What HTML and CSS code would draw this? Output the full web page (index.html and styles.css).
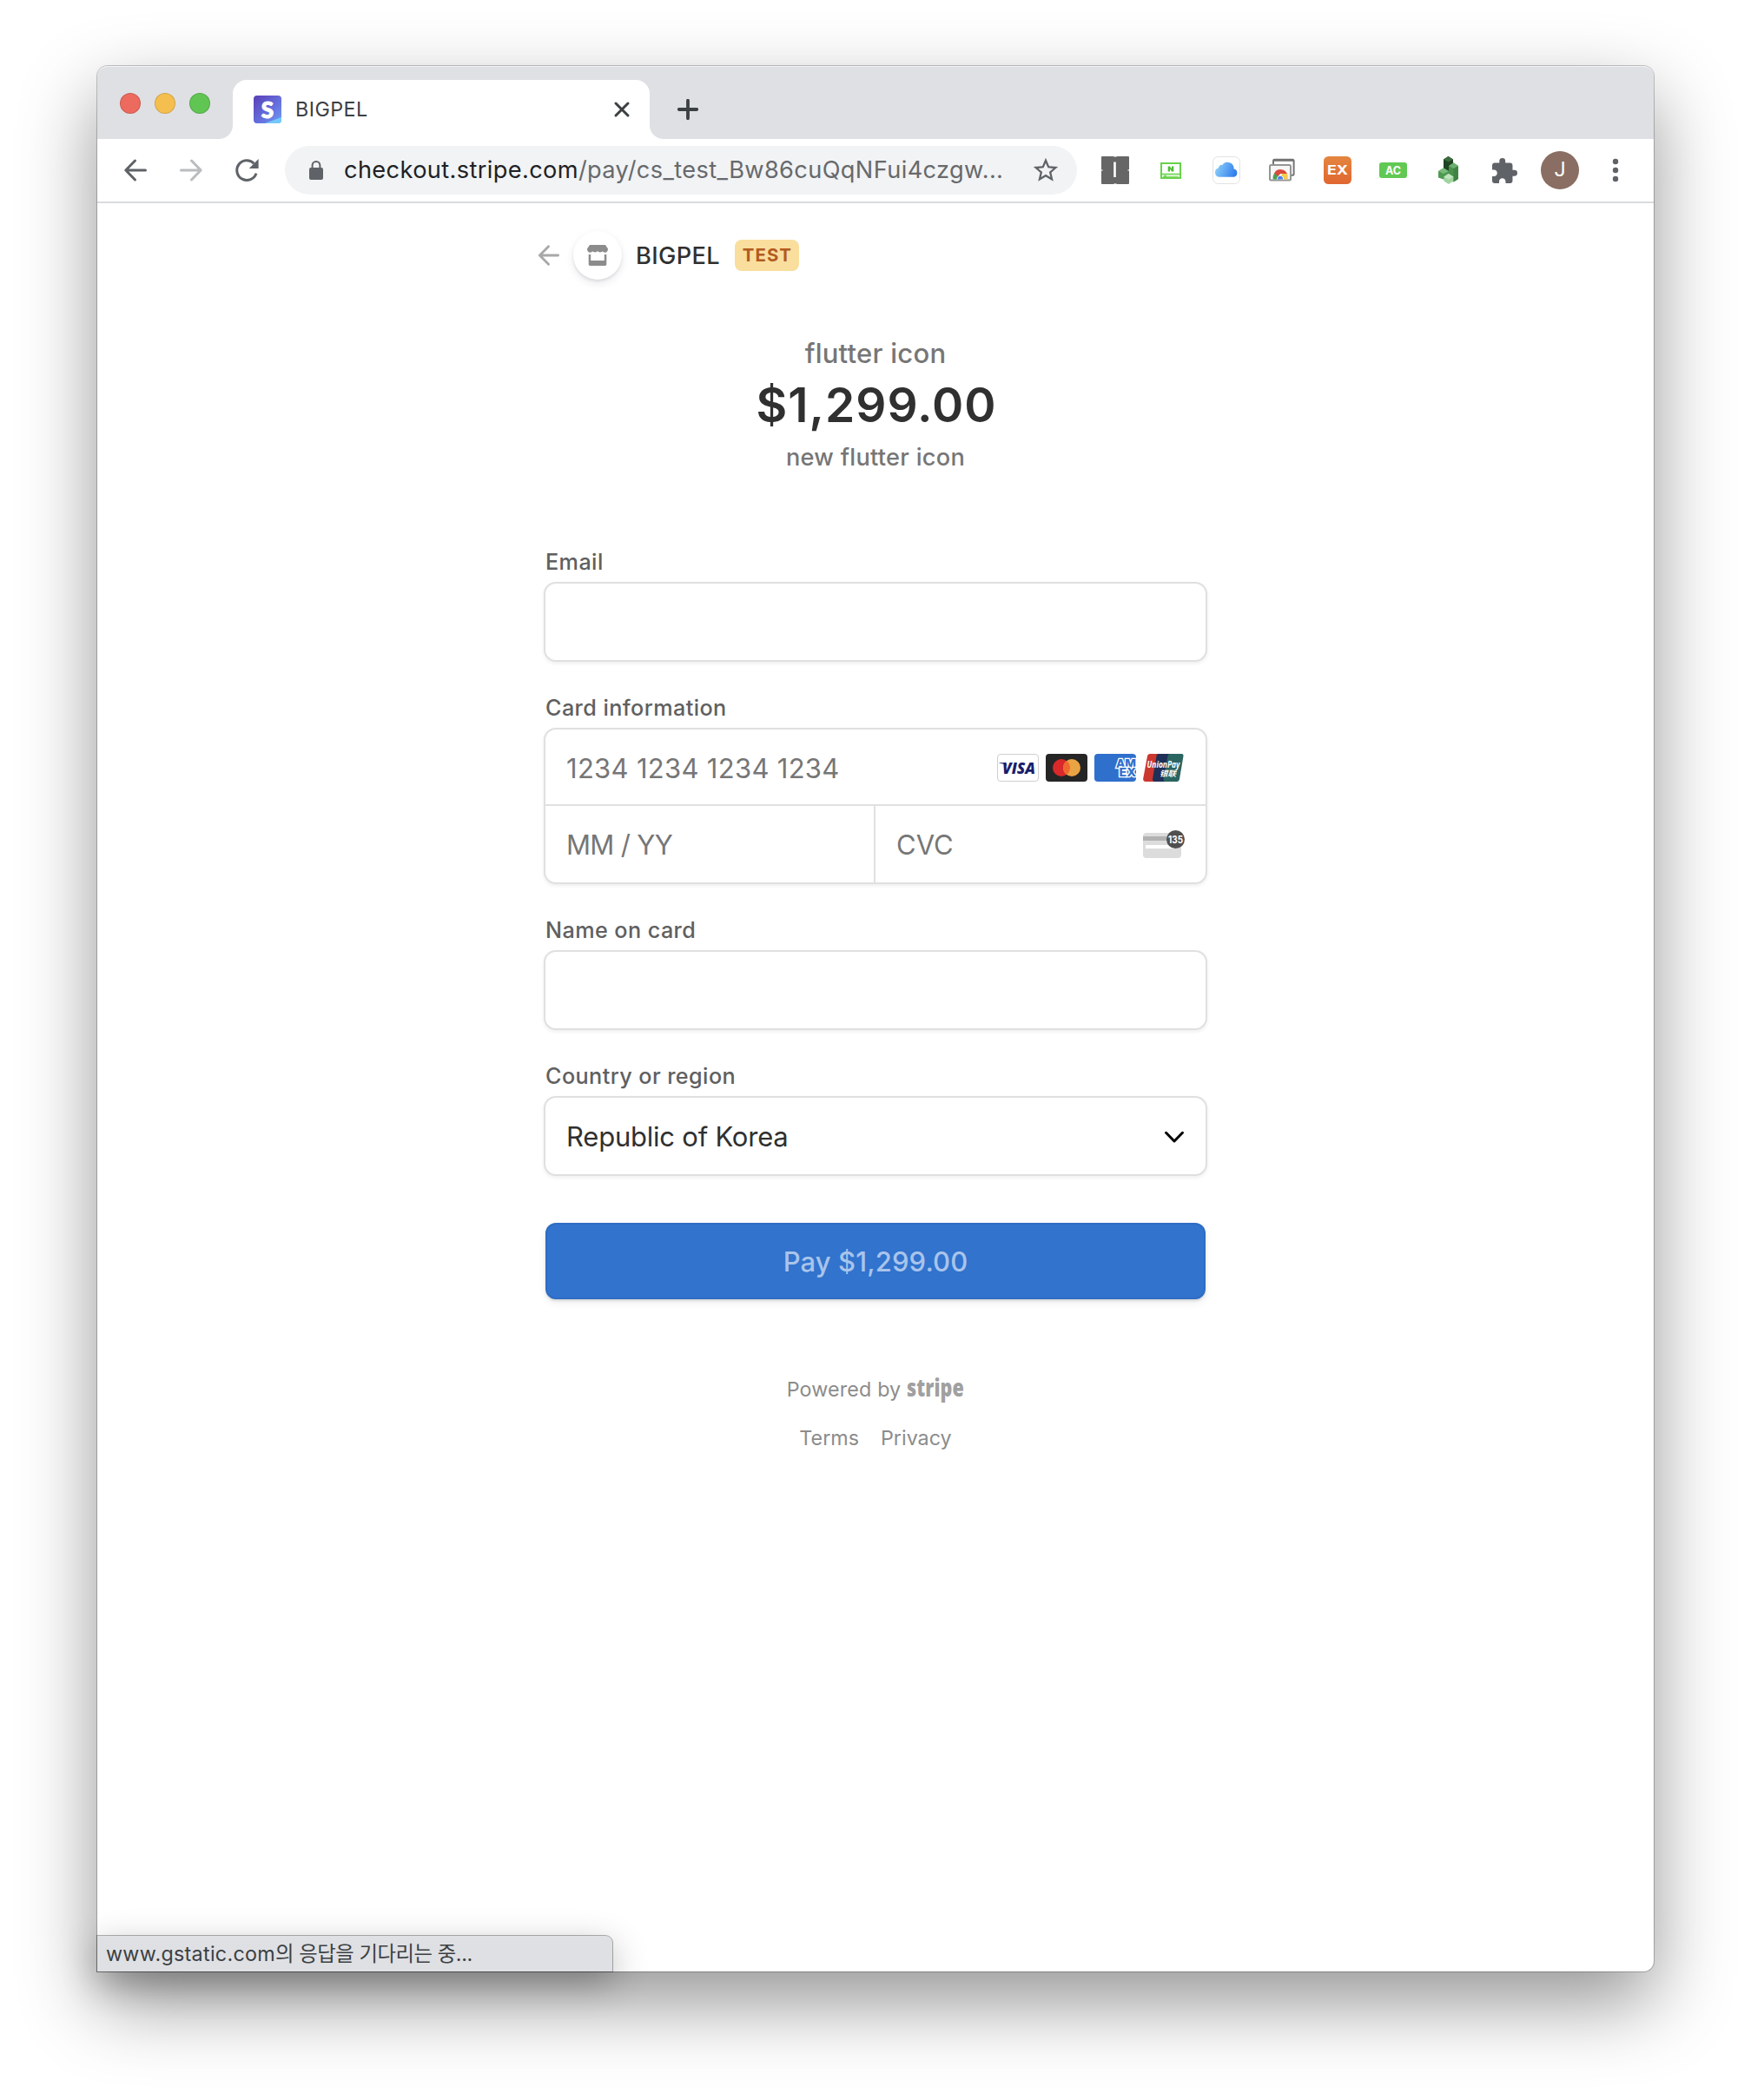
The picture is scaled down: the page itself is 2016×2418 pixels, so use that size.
FILE: index.html
```html
<!DOCTYPE html>
<html lang="en">
<head>
<meta charset="utf-8">
<title>BIGPEL</title>
<link rel="stylesheet" href="styles.css">
</head>
<body>
<div class="window">
  <div class="tabstrip">
    <div class="lights"><span class="light red"></span><span class="light yellow"></span><span class="light green"></span></div>
    <div class="tab">
      <svg class="favicon" width="32" height="32" viewBox="0 0 32 32">
        <defs><linearGradient id="fav" x1="0" y1="0" x2="1" y2="1"><stop offset="0" stop-color="#5a3fb6"/><stop offset=".6" stop-color="#6672e0"/><stop offset="1" stop-color="#6f9df0"/></linearGradient></defs>
        <rect width="32" height="32" rx="4" fill="url(#fav)"/>
        <path d="M13 32L32 25v3a4 4 0 0 1-4 4z" fill="#74c8fb"/>
        <text x="16" y="25.5" text-anchor="middle" class="fav-letter">S</text>
      </svg>
      <span class="tab-title">BIGPEL</span>
      <svg class="tab-close" width="20" height="20" viewBox="0 0 20 20"><path d="M3 3l14 14M17 3L3 17" stroke="#3c4043" stroke-width="3" stroke-linecap="round"/></svg>
    </div>
    <svg class="new-tab" width="24" height="24" viewBox="0 0 24 24"><path d="M12 1.8v20.4M1.8 12h20.4" stroke="#3c4043" stroke-width="3.8" stroke-linecap="round"/></svg>
  </div>
  <div class="toolbar">
    <div class="slot"><svg width="32" height="32" viewBox="0 0 32 32" fill="none" stroke="#5f6368" stroke-width="3" stroke-linecap="round" stroke-linejoin="round"><path d="M27.5 16H5M15.5 5L4.8 16l10.7 11"/></svg></div>
    <div class="slot"><svg width="32" height="32" viewBox="0 0 32 32" fill="none" stroke="#babcbe" stroke-width="3" stroke-linecap="round" stroke-linejoin="round"><path d="M4.5 16H27M16.5 5l10.7 11-10.7 11"/></svg></div>
    <div class="slot"><svg width="32" height="32" viewBox="0 0 32 32" fill="none"><path d="M27 19.6A11.4 11.4 0 1 1 24.4 8.2" stroke="#5f6368" stroke-width="3"/><path d="M29.6 3v11H18.8z" fill="#5f6368"/></svg></div>
    <div class="omnibox">
      <svg class="lock" width="16" height="22" viewBox="0 0 16 22"><rect y="8" width="16" height="14" rx="2" fill="#5f6368"/><path d="M3.6 9V5.4a4.4 4.4 0 0 1 8.8 0V9" fill="none" stroke="#5f6368" stroke-width="2"/></svg>
      <span class="url"><span class="host">checkout.stripe.com</span>/pay/cs_test_Bw86cuQqNFui4czgw...</span>
      <svg class="star" width="34" height="34" viewBox="0 0 24 24"><path fill="#5f6368" d="M22 9.24l-7.19-.62L12 2 9.19 8.63 2 9.24l5.46 4.73L5.82 21 12 17.27 18.18 21l-1.63-7.03L22 9.24zM12 15.4l-3.76 2.27 1-4.28-3.32-2.88 4.38-.38L12 6.1l1.71 4.04 4.38.38-3.32 2.88 1 4.28L12 15.4z"/></svg>
    </div>
    <div class="extensions">
      <div class="slot"><svg width="32" height="32" viewBox="0 0 32 32"><rect width="32" height="32" rx="1" fill="#666"/><path d="M15.5 6.5v17.5" stroke="#fff" stroke-width="2.6"/><path d="M14.5 0h3M14.5 32h3M0 16h1.5M30.5 16h1.5" stroke="#ddd" stroke-width="1.4"/></svg></div>
      <div class="slot"><svg width="24" height="19" viewBox="0 0 24 19"><rect x="1" y="1" width="22" height="17" fill="#fff" stroke="#67d24a" stroke-width="2"/><path d="M1 13.5h22" stroke="#67d24a" stroke-width="1.6"/><path d="M3 16.2h18" stroke="#67d24a" stroke-width="1"/><circle cx="5.5" cy="16" r="1.4" fill="#67d24a"/><path d="M8.7 10.5v-6h2.3l2 3v-3h2.3v6H13l-2-3v3z" fill="#4fbd35"/></svg></div>
      <div class="slot"><svg width="32" height="32" viewBox="0 0 32 32"><defs><linearGradient id="cl" x1="0" y1=".3" x2="1" y2=".6"><stop offset="0" stop-color="#8dd0fb"/><stop offset="1" stop-color="#2f7ceb"/></linearGradient></defs><rect x=".5" y=".5" width="31" height="31" rx="6" fill="#fff" stroke="#e2e2e4"/><path d="M8 23.8a5.2 5.2 0 0 1-1.2-10.2 4 4 0 0 1 4.5-3.7 7.3 7.3 0 0 1 13.3 4.5 4.8 4.8 0 0 1-.1 9.4z" fill="url(#cl)"/></svg></div>
      <div class="slot"><svg width="32" height="28" viewBox="0 0 32 28"><rect x="6" y="1.8" width="23.6" height="18" rx="1.5" fill="#fff" stroke="#737373" stroke-width="2"/><path d="M6 2.6h23" stroke="#737373" stroke-width="2.4"/><rect x="2" y="8" width="24" height="17.6" rx="1.5" fill="#f6f6f6" stroke="#959595" stroke-width="2"/><path d="M5.8 24.6a8.4 8.4 0 0 1 2.6-8l5.6 8z" fill="#4aa054"/><path d="M7 17.5a8.4 8.4 0 0 1 15 .5h-8l-2.5 3z" fill="#d94b3c"/><path d="M22 18a8.6 8.6 0 0 1 .4 6.6H14l2-6.6z" fill="#f6cc4b"/><path d="M10 24.6a4 4 0 1 1 8 0z" fill="#fff"/><path d="M11 24.6a3.1 3.1 0 1 1 6 0z" fill="#4680ee"/></svg></div>
      <div class="slot"><svg width="32" height="32" viewBox="0 0 32 32"><defs><linearGradient id="ex" x2="0" y2="1"><stop offset="0" stop-color="#e48540"/><stop offset="1" stop-color="#e06730"/></linearGradient></defs><rect width="32" height="32" rx="5.5" fill="url(#ex)"/><text x="4" y="21" class="ext-text" font-size="14.5" textLength="24" lengthAdjust="spacingAndGlyphs">EX</text></svg></div>
      <div class="slot"><svg width="32" height="18" viewBox="0 0 32 18"><rect width="32" height="18" rx="3" fill="#60c953"/><text x="7" y="13.6" class="ext-text" font-size="12.5" textLength="18" lengthAdjust="spacingAndGlyphs">AC</text></svg></div>
      <div class="slot"><svg width="24" height="32" viewBox="0 0 24 32"><path d="M6 3.4L11.5 0 17 3.4V20H6z" fill="#1f4423"/><path d="M6 3.4L11.5 0 17 3.4l-5.5 3z" fill="#3d6b40"/><path d="M12 11l5.5-3.4L23 11v15l-5.5 3.4L12 26z" fill="#4a914c"/><path d="M17.5 14L23 11v15l-5.5 3.4z" fill="#3f8442"/><path d="M12 11l5.5-3.4L23 11l-5.5 3z" fill="#6cb070"/><path d="M0 17l6-3.4 6 3.4v12l-6-2.6-6-2z" fill="#4e9a51"/><path d="M0 17l6-3.4 6 3.4-6 3z" fill="#79bb7b"/><path d="M6.4 23.4l5.4-3.4 5.6 3.4v5L11.8 32l-5.4-3.6z" fill="#a0d4a1"/><path d="M6.4 23.4l5.4-3.4 5.6 3.4-5.6 3.2z" fill="#c0e6c0"/></svg></div>
      <div class="slot"><svg class="puzzle" width="29" height="29" viewBox="2 1 21 21"><path fill="#5f6368" d="M20.5 11H19V7c0-1.1-.9-2-2-2h-4V3.5a2.5 2.5 0 0 0-5 0V5H4c-1.1 0-1.99.9-1.99 2v3.8H3.5c1.49 0 2.7 1.21 2.7 2.7s-1.21 2.7-2.7 2.7H2V20c0 1.1.9 2 2 2h3.8v-1.5c0-1.49 1.21-2.7 2.7-2.7s2.7 1.21 2.7 2.7V22H17c1.1 0 2-.9 2-2v-4h1.5a2.5 2.5 0 0 0 0-5z"/></svg></div>
      <div class="slot"><span class="avatar">J</span></div>
      <div class="slot"><svg width="8" height="28" viewBox="0 0 8 28" fill="#5f6368"><circle cx="4" cy="4" r="3.2"/><circle cx="4" cy="14" r="3.2"/><circle cx="4" cy="24" r="3.2"/></svg></div>
    </div>
  </div>
  <main class="page">
    <div class="checkout">
      <header class="merchant">
        <svg width="24" height="24" viewBox="0 0 24 24" fill="none" stroke="#a8a8a8" stroke-width="2.8" stroke-linecap="round" stroke-linejoin="round"><path d="M22.6 12H2M11.5 1.8L1.4 12l10.1 10.2"/></svg>
        <span class="store"><svg width="24" height="24" viewBox="0 0 24 24" fill="#8c8c8c"><path d="M3 0h18l3 4.5c0 2.5-1.3 4.3-3.3 4.3-1.5 0-2.4-.8-2.9-1.5-.6.7-1.4 1.1-2.9 1.1S12.6 7.5 12 6.9c-.6.6-1.4 1.5-2.9 1.5S6.8 8 6.2 7.3C5.7 8 4.8 8.8 3.3 8.8 1.3 8.8 0 7 0 4.5z"/><path d="M1.7 11h2.5v7h15.6v-7h2.5v11.3c0 1-.7 1.7-1.7 1.7H3.4c-1 0-1.7-.7-1.7-1.7z"/></svg></span>
        <span class="merchant-name">BIGPEL</span>
        <span class="badge">TEST</span>
      </header>
      <section class="product">
        <div class="product-name">flutter icon</div>
        <div class="price">$1,299.00</div>
        <div class="product-desc">new flutter icon</div>
      </section>
      <div class="label">Email</div>
      <div class="field"></div>
      <div class="label">Card information</div>
      <div class="field card-field">
        <div class="number-row">
          <span class="placeholder number">1234 1234 1234 1234</span>
          <div class="brands">
            <svg width="48" height="32" viewBox="0 0 48 32"><rect x=".5" y=".5" width="47" height="31" rx="3.5" fill="#fff" stroke="#cfcfcf"/><text x="6" y="23" class="visa" textLength="38" lengthAdjust="spacingAndGlyphs">VISA</text><path d="M2.5 10.2h7.5l1.5 4c-2-2-5-3-9-3.4z" fill="#191e6b"/></svg>
            <svg width="48" height="32" viewBox="0 0 48 32"><rect width="48" height="32" rx="4" fill="#252525"/><circle cx="18" cy="16" r="10" fill="#d9292a"/><circle cx="30" cy="16" r="10" fill="#eba443"/><path d="M24 8a10 10 0 0 1 0 16 10 10 0 0 1 0-16z" fill="#ee6a2d"/></svg>
            <svg width="48" height="32" viewBox="0 0 48 32"><defs><clipPath id="ax"><rect width="48" height="32" rx="4"/></clipPath></defs><g clip-path="url(#ax)"><rect width="48" height="32" fill="#2f70cc"/><text x="25" y="15.5" class="amex" textLength="23" lengthAdjust="spacingAndGlyphs">AM</text><text x="28.5" y="26" class="amex" textLength="19.5" lengthAdjust="spacingAndGlyphs">EX</text></g></svg>
            <svg width="48" height="32" viewBox="0 0 48 32"><path d="M8 0h12l-6 32H3c-2 0-3.2-1.5-2.8-3.5L5 2.5C5.4 1 6.5 0 8 0z" fill="#cc382f"/><path d="M18 0h14l-6 32H13.500c-2 0-2.700-1.500-2.400-3.500L15.500 2.500C15.800 1 16.500 0 18 0z" fill="#1f3058"/><path d="M31 0h13.500c1.500 0 2.300 1 2 2.500L42 29c-.4 2-1.500 3-3 3H26c-2 0-2.700-1.500-2.400-3.500L28.500 2.500C28.800 1 29.500 0 31 0z" fill="#2b6561"/><text x="4.500" y="16" class="union" textLength="38" lengthAdjust="spacingAndGlyphs">UnionPay</text><text x="19" y="25.500" class="union-cn" textLength="19" lengthAdjust="spacingAndGlyphs">银联</text></svg>
          </div>
        </div>
        <div class="split-row">
          <div class="cell"><span class="placeholder expiry">MM / YY</span></div>
          <div class="cell cvc-cell"><span class="placeholder">CVC</span>
            <svg width="48" height="32" viewBox="0 0 48 32"><rect y="3" width="44" height="29" rx="4" fill="#dcdcdc"/><rect y="7" width="32" height="5" fill="#b2b2b2"/><rect x="3" y="17" width="36" height="4" fill="#fff"/><circle cx="37.5" cy="10.5" r="10.5" fill="#4f4f4f"/><text x="29" y="14.7" class="cvc-num" textLength="17" lengthAdjust="spacingAndGlyphs">135</text></svg>
          </div>
        </div>
      </div>
      <div class="label">Name on card</div>
      <div class="field"></div>
      <div class="label">Country or region</div>
      <div class="field select"><span class="country">Republic of Korea</span><svg width="24" height="16" viewBox="0 0 24 16"><path d="M2.5 3.3L12 13l9.5-9.7" fill="none" stroke="#000" stroke-width="3" stroke-linecap="round" stroke-linejoin="round"/></svg></div>
      <div class="pay">Pay $1,299.00</div>
      <footer>
        <div class="powered"><span>Powered by</span><svg width="68" height="44" viewBox="0 -2 68 44"><text x="1" y="29" class="stripe" textLength="66" lengthAdjust="spacingAndGlyphs">stripe</text></svg></div>
        <div class="links"><span>Terms</span><span>Privacy</span></div>
      </footer>
    </div>
  </main>
  <div class="status"><span class="status-host">www.gstatic.com</span><span class="status-message">의 응답을 기다리는 중...</span></div>
</div>
</body>
</html>
```

FILE: styles.css
```css
* { box-sizing: border-box; }
body {
  margin: 0;
  padding: 76px 112px 148px;
  background: #fff;
  font-family: Inter, "Noto Sans CJK KR", sans-serif;
}
svg { display: block; flex: none; }
.window {
  position: relative;
  width: 1792px;
  height: 2194px;
  background: #fff;
  border-radius: 12px 12px 12px 0;
  box-shadow: 0 0 0 1px rgba(0, 0, 0, .22), 0 36px 88px rgba(0, 0, 0, .42);
}

/* tab strip */
.tabstrip {
  display: flex;
  height: 84px;
  background: #dfe0e4;
  border-radius: 12px 12px 0 0;
  box-shadow: inset 0 2px 0 -1px #f2f3f4;
}
.lights { display: flex; gap: 16px; padding: 31px 26px 0; width: 156px; }
.light { width: 24px; height: 24px; border-radius: 50%; border: 1px solid rgba(0, 0, 0, .14); }
.red { background: #ed6a5e; }
.yellow { background: #f5bf4f; }
.green { background: #61c554; }
.tab {
  position: relative;
  display: flex;
  align-items: center;
  width: 480px;
  height: 68px;
  margin-top: 16px;
  padding: 0 22px 0 24px;
  background: #fff;
  border-radius: 16px 16px 0 0;
}
.tab::before, .tab::after { content: ""; position: absolute; bottom: 0; width: 16px; height: 16px; }
.tab::before { left: -16px; background: radial-gradient(circle at 0 0, transparent 15.5px, #fff 16.5px); }
.tab::after { right: -16px; background: radial-gradient(circle at 100% 0, transparent 15.5px, #fff 16.5px); }
.fav-letter { font: 900 26px Lato, sans-serif; fill: #fff; stroke: #fff; stroke-width: 1px; }
.tab-title { flex: 1; padding-left: 16px; font-size: 23.3px; letter-spacing: .45px; color: #3c4043; line-height: 32px; }
.new-tab { margin: 38px 0 0 32px; }

/* toolbar */
.toolbar {
  display: flex;
  align-items: center;
  height: 74px;
  padding: 0 12px;
  border-bottom: 2px solid #dadbe0;
}
.slot { display: flex; align-items: center; justify-content: center; width: 64px; height: 56px; }
.omnibox {
  display: flex;
  align-items: center;
  width: 912px;
  height: 56px;
  margin: 0 12px;
  padding: 0 19px 0 28px;
  border-radius: 28px;
  background: #f1f3f5;
}
.url { flex: 1; padding-left: 24px; font-size: 27.2px; letter-spacing: .37px; line-height: 40px; white-space: nowrap; color: #67696c; }
.host { color: #202124; }
.extensions { display: flex; }
.ext-text { font-family: Inter, sans-serif; font-weight: 700; fill: #fff; }
.avatar {
  width: 44px;
  height: 44px;
  border-radius: 50%;
  background: #8a6e63;
  color: #fff;
  font: 23px/44px Roboto, sans-serif;
  text-align: center;
}

/* checkout page */
.page { display: flex; justify-content: center; }
.checkout { width: 764px; padding-top: 32px; }
.merchant { display: flex; align-items: center; height: 56px; margin-left: -6px; }
.store {
  display: flex;
  align-items: center;
  justify-content: center;
  width: 56px;
  height: 56px;
  margin-left: 16px;
  border-radius: 50%;
  background: #fff;
  box-shadow: 0 4px 10px rgba(60, 66, 87, .12), 0 2px 3px rgba(0, 0, 0, .08);
}
.merchant-name { margin-left: 16px; font-size: 27.2px; letter-spacing: .35px; font-weight: 500; color: #303030; }
.badge {
  width: 74px;
  height: 36px;
  margin-left: 17px;
  padding-left: 1px;
  border-radius: 8px;
  background: #f9de9d;
  color: #b35a1f;
  font-size: 20.4px;
  font-weight: 700;
  letter-spacing: 1.1px;
  line-height: 36px;
  text-align: center;
}
.product { padding-top: 65px; text-align: center; color: #767676; font-weight: 450; }
.product-name { font-size: 31px; line-height: 40px; letter-spacing: .25px; }
.price { margin-top: 7px; padding-left: 2px; font-size: 55px; line-height: 64px; font-weight: 600; letter-spacing: 1px; color: #303030; }
.product-desc { margin: 11px 0 85px; font-size: 27.2px; line-height: 36px; letter-spacing: .28px; }
.label {
  height: 32px;
  padding: 1px 0 0 2px;
  font-size: 25.2px;
  line-height: 32px;
  font-weight: 470;
  letter-spacing: .42px;
  color: #606060;
}
.field {
  height: 92px;
  margin: 8px 0 36px;
  border: 2px solid #e0e0e0;
  border-radius: 14px;
  background: #fff;
  box-shadow: 0 2px 4px rgba(0, 0, 0, .07);
}
.card-field { height: 180px; }
.number-row {
  display: flex;
  align-items: center;
  justify-content: space-between;
  height: 88px;
  padding: 2px 24px 0;
  border-bottom: 2px solid #e0e0e0;
}
.brands { display: flex; gap: 8px; }
.split-row { display: flex; height: 88px; }
.cell { display: flex; align-items: center; width: 380px; padding: 0 24px; border-right: 2px solid #e0e0e0; }
.cvc-cell { justify-content: space-between; border-right: 0; }
.placeholder { padding-top: 1px; font-size: 31px; line-height: 40px; color: #767676; }
.number { padding-top: 2px; letter-spacing: .3px; }
.expiry { letter-spacing: -.65px; }
.visa { font: italic 800 18px "Open Sans", sans-serif; fill: #191e6b; }
.amex { font: 800 13px Inter, sans-serif; fill: #2f70cc; stroke: #fff; stroke-width: 2.6px; paint-order: stroke; }
.union { font: italic 700 10.5px "Open Sans", sans-serif; fill: #fff; }
.union-cn { font: italic 700 9px "Noto Sans CJK SC", sans-serif; fill: #fff; }
.cvc-num { font: 700 11.5px Inter, sans-serif; fill: #fff; }
.select { display: flex; align-items: center; justify-content: space-between; padding: 2px 24px 0; margin-bottom: 54px; }
.country { font-size: 31px; line-height: 40px; letter-spacing: -.22px; color: #303030; }
.pay {
  height: 88px;
  margin: 0 2px;
  border: 2px solid #2e6cc3;
  border-radius: 12px;
  background: #3173cd;
  color: #a9c4eb;
  font-size: 31px;
  font-weight: 500;
  letter-spacing: .12px;
  line-height: 85px;
  text-align: center;
  box-shadow: 0 2px 3px rgba(0, 0, 0, .12), 0 4px 10px rgba(60, 66, 87, .08);
}
footer { color: #8c8c8c; font-size: 23.3px; }
.powered { display: flex; justify-content: center; align-items: center; height: 36px; margin-top: 85px; padding-left: 1px; gap: 6px; letter-spacing: .15px; }
.stripe { font: 800 28.5px "Open Sans", sans-serif; fill: #a0a0a0; }
.links { display: flex; justify-content: center; gap: 25px; margin-top: 23px; line-height: 32px; }

/* loading status bubble */
.status {
  position: absolute;
  left: 0;
  bottom: 0;
  width: 593px;
  height: 41px;
  padding-left: 10px;
  border-radius: 0 8px 0 0;
  background: #dfe0e4;
  color: #3c4043;
  font-size: 23.3px;
  line-height: 42px;
  white-space: nowrap;
  box-shadow: 0 0 0 1px rgba(0, 0, 0, .3), 0 12px 40px rgba(0, 0, 0, .3);
}
.status-host { letter-spacing: .3px; }
.status-message { letter-spacing: -.4px; }
```
